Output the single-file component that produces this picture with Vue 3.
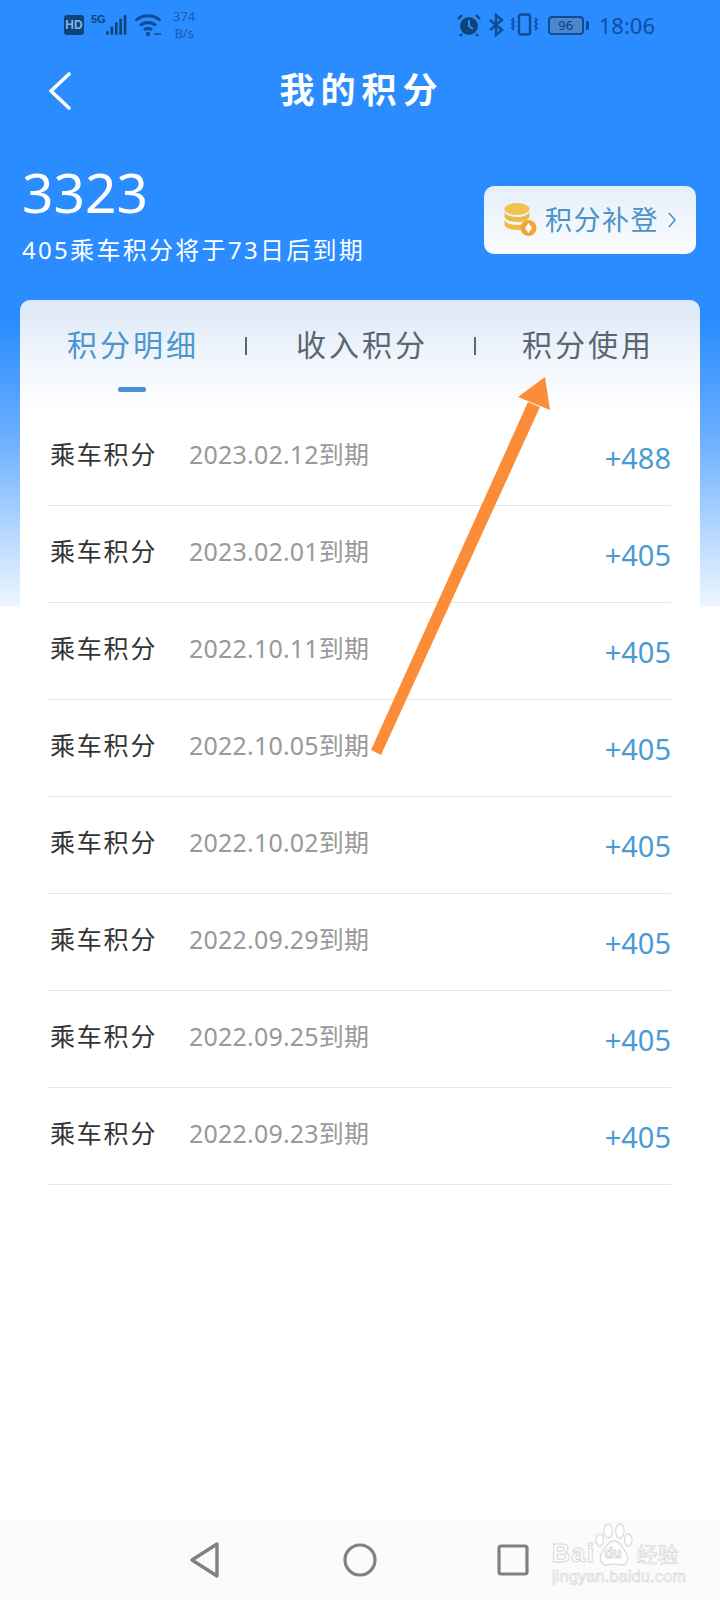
<script setup>
const rows = [
  { date: '2023.02.12到期', pts: '+488' },
  { date: '2023.02.01到期', pts: '+405' },
  { date: '2022.10.11到期', pts: '+405' },
  { date: '2022.10.05到期', pts: '+405' },
  { date: '2022.10.02到期', pts: '+405' },
  { date: '2022.09.29到期', pts: '+405' },
  { date: '2022.09.25到期', pts: '+405' },
  { date: '2022.09.23到期', pts: '+405' },
]
const tabs = ['积分明细', '收入积分', '积分使用']
</script>

<template>
  <div class="page">
    <div class="status">
      <div class="status-left">
        <span class="hd">HD</span>
        <div class="signal">
          <span class="five-g">5G</span>
          <svg width="24" height="22" viewBox="0 0 24 22">
            <rect x="0" y="18" width="3" height="4" />
            <rect x="5" y="13" width="3" height="9" />
            <rect x="10" y="8" width="3" height="14" />
            <rect x="15" y="4" width="3" height="18" />
            <rect x="20" y="0" width="3" height="22" />
          </svg>
        </div>
        <svg class="wifi" width="28" height="24" viewBox="0 0 28 24" fill="none" stroke="#0f4c96" stroke-width="3">
          <path d="M1.5 7.5C8.5 1 19.5 1 26.5 7.5" />
          <path d="M6 12.5C10.5 8.5 17.5 8.5 22 12.5" />
          <path d="M10 17C12.5 15 15.5 15 18 17" />
          <circle cx="14" cy="21" r="2.2" fill="#0f4c96" stroke="none" />
          <path d="M20 21h7" stroke-width="1.5" />
        </svg>
        <div class="speed"><span>374</span><span>B/s</span></div>
      </div>
      <div class="status-right">
        <svg width="24" height="24" viewBox="0 0 24 24">
          <circle cx="12" cy="13" r="9" fill="#0f4478" />
          <path d="M12 7v6l4 3" fill="none" stroke="#2a8cff" stroke-width="2" />
          <path d="M1 6l4-4M23 6l-4-4M5 21l-2 2M19 21l2 2" stroke="#0f4478" stroke-width="2.4" />
        </svg>
        <svg width="16" height="24" viewBox="0 0 16 24" fill="none" stroke="#0f4c96" stroke-width="2.4">
          <path d="M2 7l12 10-6 5V2l6 5L2 17" />
        </svg>
        <svg width="28" height="24" viewBox="0 0 28 24" fill="none" stroke="#0f4c96" stroke-width="2">
          <rect x="8" y="1.5" width="11" height="20" rx="2" stroke-width="2.4" />
          <path d="M3 5l-2 2 2 2-2 2 2 2-2 2 2 2M24 5l2 2-2 2 2 2-2 2 2 2-2 2" stroke-width="1.6" />
        </svg>
        <div class="battery">
          <span class="battery-body">96</span>
          <span class="battery-tip"></span>
        </div>
        <span class="time">18:06</span>
      </div>
    </div>

    <div class="nav">
      <svg class="back" width="24" height="38" viewBox="0 0 24 38" fill="none" stroke="#fff" stroke-width="3.6" stroke-linecap="round" stroke-linejoin="round">
        <path d="M21 2L3 19l18 17" />
      </svg>
      <span class="title">我的积分</span>
    </div>

    <div class="hero">
      <div class="hero-text">
        <div class="score">3323</div>
        <div class="expire">405乘车积分将于73日后到期</div>
      </div>
      <div class="makeup">
        <svg width="33" height="34" viewBox="0 0 33 34">
          <ellipse cx="13" cy="6" rx="12.5" ry="6" fill="#f2c14e" />
          <path d="M.5 9c2 3.500 6 5 12.500 5s10.500-1.500 12.500-5v5c-2 3.500-6 5-12.500 5S2.500 17.500.5 14z" fill="#f0b93f" />
          <path d="M.5 17c2 3.500 6 5 12.500 5 2 0 4 0 5.500-.5l-2 5.500h-3.500c-6.500 0-10.500-1.500-12.500-5z" fill="#f0b93f" />
          <circle cx="24.500" cy="25" r="8" fill="#f0a43a" />
          <path d="M24.500 20l3.500 5-3.500 5-3.500-5z" fill="#fff" />
        </svg>
        <span class="makeup-label">积分补登</span>
        <svg width="9" height="16" viewBox="0 0 9 16" fill="none" stroke="#4a93c9" stroke-width="1.6">
          <path d="M1 1l6 7-6 7" />
        </svg>
      </div>
    </div>

    <div class="card">
      <div class="tabs">
        <template v-for="(t, i) in tabs" :key="t">
          <span class="sep" v-if="i > 0"></span>
          <div class="tab" :class="{ active: i === 0 }">{{ t }}</div>
        </template>
      </div>
      <div class="list">
        <div class="row" v-for="r in rows" :key="r.date">
          <span class="kind">乘车积分</span>
          <span class="date">{{ r.date }}</span>
          <span class="pts">{{ r.pts }}</span>
        </div>
      </div>
    </div>

    <div class="bottom">
      <svg width="30" height="36" viewBox="0 0 30 36" fill="none" stroke="#808080" stroke-width="3.4" stroke-linejoin="round">
        <path d="M27 2v32L2 18z" />
      </svg>
      <svg width="34" height="34" viewBox="0 0 34 34" fill="none" stroke="#808080" stroke-width="3.2">
        <circle cx="17" cy="17" r="15" />
      </svg>
      <svg width="32" height="32" viewBox="0 0 32 32" fill="none" stroke="#808080" stroke-width="3.2">
        <rect x="2" y="2" width="28" height="28" rx="2" />
      </svg>
    </div>

    <!-- annotation drawn over the screenshot -->
    <svg class="arrow" width="720" height="800" viewBox="0 0 720 800">
      <path d="M371 750L528 402l12 5L381 755z" fill="#fb8c38" />
      <path d="M545 377l5 33-32-13z" fill="#fb8c38" />
    </svg>

    <div class="watermark">
      <svg class="paw" width="42" height="50" viewBox="0 0 50 50" preserveAspectRatio="none" fill="#fff" stroke="#dcdcdc" stroke-width="1.5">
        <ellipse cx="18" cy="9" rx="5" ry="7" />
        <ellipse cx="32" cy="9" rx="5" ry="7" />
        <ellipse cx="8" cy="18" rx="4.500" ry="6" />
        <ellipse cx="42" cy="18" rx="4.500" ry="6" />
        <path d="M25 19c7 0 9 6 14 11 5 6 1 14-6 13-4-.5-5-1-8-1s-4 .5-8 1c-7 1-11-7-6-13 5-5 7-11 14-11z" />
      </svg>
      <div class="mark-line">
        <span class="mark-bai">Bai</span>
        <span class="mark-du">du</span>
        <span class="mark-cn">经验</span>
      </div>
      <div class="mark-url">jingyan.baidu.com</div>
    </div>
  </div>
</template>

<style scoped>
.page {
  position: relative;
  width: 720px;
  height: 1600px;
  overflow: hidden;
  display: flex;
  flex-direction: column;
  background: #fff linear-gradient(180deg, #2a8cff 0, #2a8cff 320px, #66adff 430px, #eef6ff 606px) no-repeat 0 0 / 100% 607px;
  font-family: "Noto Sans", "Noto Sans CJK SC", sans-serif;
}
.status {
  height: 50px;
  flex: none;
  display: flex;
  justify-content: space-between;
  align-items: center;
  padding: 0 65px 0 64px;
  color: #0f4c96;
}
.status-left, .status-right {
  display: flex;
  align-items: center;
}
.hd {
  width: 20px;
  height: 20px;
  line-height: 20px;
  text-align: center;
  border-radius: 3px;
  background: #0f4478;
  color: #7fb6f0;
  font: bold 12px/20px "Liberation Sans Narrow", "Liberation Sans", sans-serif;
}
.signal {
  display: flex;
  margin-left: 7px;
  width: 36px;
  height: 22px;
  justify-content: flex-end;
  fill: #0f4478;
}
.five-g {
  font: bold 11px/10px "Liberation Sans Narrow", "Liberation Sans", sans-serif;
  color: #0f4478;
}
.wifi { margin-left: 7px; }
.speed {
  display: flex;
  flex-direction: column;
  margin-left: 11px;
  font-size: 13px;
  line-height: 17px;
  color: #1a5cab;
  align-items: center;
}
.status-right { gap: 7px; }
.battery {
  display: flex;
  align-items: center;
  gap: 2px;
  margin-left: 2px;
}
.battery-body {
  width: 36px;
  height: 19px;
  box-sizing: border-box;
  border: 2px solid #0f4c96;
  border-radius: 4px;
  background: #4b86cf;
  color: #0f3f78;
  font-size: 13px;
  line-height: 15px;
  text-align: center;
}
.battery-tip {
  width: 3px;
  height: 9px;
  border-radius: 0 2px 2px 0;
  background: #0f4c96;
}
.time {
  margin-left: 3px;
  font-size: 22px;
  color: #104f9e;
}
.nav {
  height: 80px;
  flex: none;
  display: flex;
  align-items: center;
  justify-content: center;
  position: relative;
}
.back {
  position: absolute;
  left: 48px;
  top: 22px;
}
.title {
  color: #fff;
  font-size: 35px;
  letter-spacing: 6px;
  line-height: 80px;
  font-weight: 700;
  margin-right: -3px;
}
.hero {
  height: 170px;
  flex: none;
  box-sizing: border-box;
  padding: 6px 24px 0 22px;
  display: flex;
  justify-content: space-between;
  align-items: flex-start;
  color: #fff;
}
.score {
  font-size: 55px;
  line-height: 64px;
  margin-top: 24px;
}
.expire {
  font-size: 24px;
  line-height: 32px;
  margin-top: 10px;
  letter-spacing: 2.300px;
}
.makeup {
  margin-top: 50px;
  width: 212px;
  height: 68px;
  box-sizing: border-box;
  padding-left: 20px;
  border-radius: 10px;
  background: linear-gradient(180deg, #e5eff9, #fbfcff);
  display: flex;
  align-items: center;
}
.makeup-label {
  margin: -4px 9px 0 8px;
  font-size: 27px;
  letter-spacing: 1.500px;
  color: #4a93c9;
}
.card {
  flex: 1;
  margin: 0 20px;
  border-radius: 10px 10px 0 0;
  background: #fff linear-gradient(180deg, #dce8f7 0, #f1f6fc 60px, #fff 115px) no-repeat;
}
.tabs {
  height: 109px;
  box-sizing: border-box;
  display: flex;
  align-items: flex-start;
  padding: 25px 0 0 47px;
}
.tab {
  position: relative;
  width: 129px;
  font-size: 30px;
  line-height: 40px;
  letter-spacing: 3px;
  white-space: nowrap;
  color: #5b6670;
}
.tab:last-child { margin-left: -3px; }
.tab.active { color: #4a97d0; }
.tab.active::after {
  content: "";
  position: absolute;
  left: 51px;
  top: 62px;
  width: 28px;
  height: 5px;
  border-radius: 2px;
  background: #4a90d9;
}
.sep {
  width: 2px;
  height: 18px;
  margin: 12px 49px 0;
  background: #5b6670;
}
.list {
  padding: 0 29px 0 28px;
}
.row {
  height: 96px;
  border-bottom: 1px solid #e6e6e6;
  display: flex;
  align-items: center;
}
.kind {
  width: 139px;
  margin-left: 2px;
  margin-top: -8px;
  font-size: 25px;
  letter-spacing: 1.800px;
  color: #333;
  flex: none;
}
.date {
  flex: 1;
  margin-top: -8px;
  font-size: 25px;
  letter-spacing: 0.200px;
  color: #999;
}
.pts {
  font-size: 29px;
  color: #4a9ad4;
}
.bottom {
  height: 80px;
  flex: none;
  background: #fbfbfb;
  display: flex;
  align-items: center;
  padding-left: 190px;
  gap: 120px;
}
.bottom svg:nth-child(2) { margin-left: 3px; }
.arrow {
  position: absolute;
  left: 0;
  top: 0;
  pointer-events: none;
}
.watermark {
  position: absolute;
  left: 552px;
  top: 1522px;
  width: 132px;
  height: 64px;
}
.paw {
  position: absolute;
  left: 41px;
  top: 0;
}
.mark-line {
  position: absolute;
  top: 18px;
  left: 0;
  width: 132px;
  height: 26px;
  display: flex;
  align-items: center;
  font-family: "Liberation Sans", sans-serif;
  font-weight: bold;
  color: #fff;
  -webkit-text-stroke: 1px #d8d8d8;
}
.mark-bai { font-size: 25px; letter-spacing: 1.500px; }
.mark-du { font-size: 14px; margin-left: 9px; }
.mark-cn {
  font-family: "Noto Sans CJK SC", sans-serif;
  font-size: 21px;
  font-weight: normal;
  margin-left: 15px;
  -webkit-text-stroke: 0.6px #d0d0d0;
}
.mark-url {
  position: absolute;
  top: 46px;
  left: 0;
  font: 16px/18px "Liberation Sans", sans-serif;
  color: #fff;
  letter-spacing: 0.300px;
  -webkit-text-stroke: 0.7px #d8d8d8;
  white-space: nowrap;
}
</style>
